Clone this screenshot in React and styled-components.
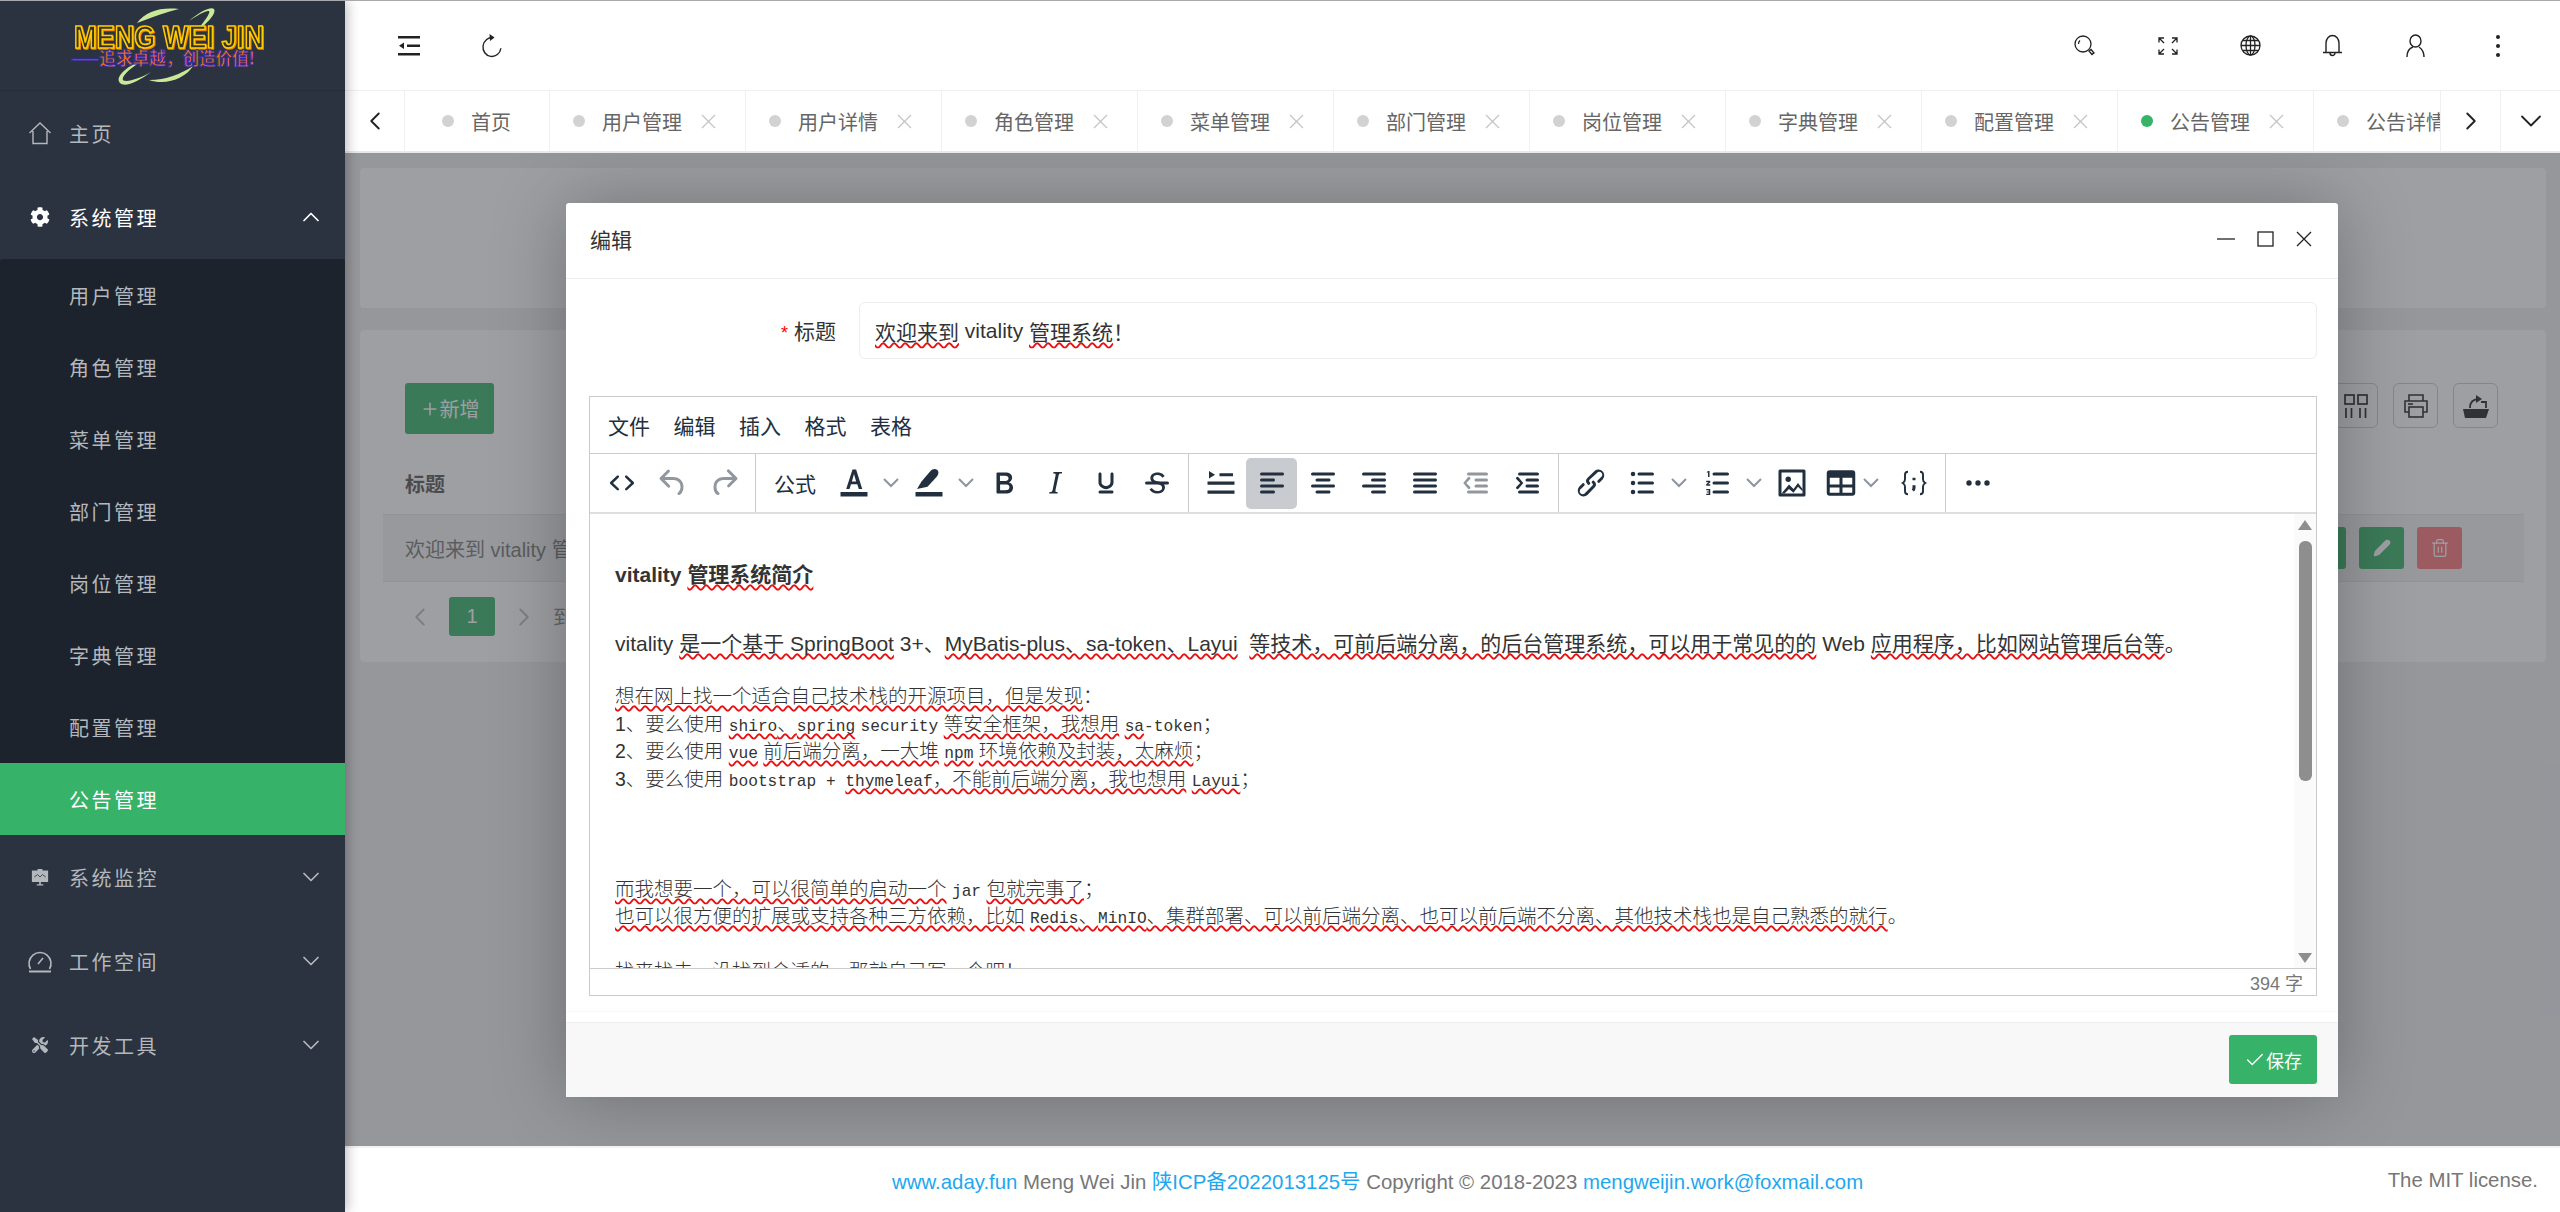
import React from 'react';
import styled, { createGlobalStyle } from 'styled-components';
import { ChevronDown, ChevronLeft, ChevronRight, ChevronUp, Check, Pencil, Plus, Trash2 } from 'lucide-react';
import { FaCog, FaTools } from 'react-icons/fa';

const Global = createGlobalStyle`
  html, body { margin: 0; padding: 0; height: 100%; overflow: hidden; }
  body { font-family: "Liberation Sans", "Noto Sans CJK SC", sans-serif; color: #333; background: #fff; }
  * { box-sizing: border-box; }
`;

const Page = styled.div`
  display: flex;
  height: 100vh;
  overflow: hidden;
  border-top: 1px solid #a9a9ad;
`;

/* sidebar */
const Aside = styled.aside`
  display: flex;
  flex-direction: column;
  flex: 0 0 345px;
  background: #2a333f;
  box-shadow: 2px 0 12px rgba(0, 0, 0, 0.28);
  position: relative;
  z-index: 3;
`;
const LogoBox = styled.div`
  display: flex;
  align-items: center;
  justify-content: center;
  height: 90px;
  border-bottom: 1px solid #252d38;
  padding-right: 10px;
`;
const LogoTitle = styled.text`
  font-family: "Liberation Sans", sans-serif;
  font-weight: 700;
  font-size: 31px;
  fill: #33332a;
  stroke: #ffcc00;
  stroke-width: 1.7px;
  filter: drop-shadow(1px 1px 0 #f08000);
`;
const LogoSlogan = styled.text`
  font-family: "Noto Sans CJK SC", sans-serif;
  font-weight: 700;
  font-size: 18px;
  fill: #f07010;
  stroke: #2a2ab0;
  stroke-width: 0.8px;
`;
const NavItem = styled.div`
  display: flex;
  align-items: center;
  height: 84px;
  padding-left: 27px;
  font-size: 20px;
  letter-spacing: 2.5px;
  color: ${p => (p.$open ? '#fff' : '#b4b8bd')};
  svg.lead { width: 26px; height: 26px; margin-right: 16px; flex: none; }
  svg.arrow { margin-left: auto; margin-right: 20px; flex: none; }
`;
const SubMenu = styled.div`
  background: #1c232c;
  border-radius: 3px 3px 0 0;
`;
const SubItem = styled.div`
  display: flex;
  align-items: center;
  height: 72px;
  padding-left: 69px;
  font-size: 20px;
  letter-spacing: 2.5px;
  color: ${p => (p.$active ? '#fff' : '#b4b8bd')};
  background: ${p => (p.$active ? '#36b368' : 'transparent')};
`;

/* main column */
const Main = styled.main`
  flex: 1;
  min-width: 0;
  display: flex;
  flex-direction: column;
`;
const Header = styled.header`
  display: flex;
  align-items: center;
  justify-content: space-between;
  height: 90px;
  padding: 0 21px 0 23px;
  background: #fff;
  border-bottom: 1px solid #f0f0f0;
  flex: none;
`;
const HeaderGroup = styled.div`
  display: flex;
`;
const HeaderBtn = styled.div`
  display: flex;
  align-items: center;
  justify-content: center;
  width: 82.5px;
  height: 89px;
  color: #222;
`;
const TabBar = styled.nav`
  display: flex;
  height: 62px;
  background: #fff;
  border-bottom: 2px solid #e9e9e9;
  flex: none;
`;
const ArrowCell = styled.div`
  display: flex;
  align-items: center;
  justify-content: center;
  flex: 0 0 60px;
  color: #222;
  border-${p => p.$side}: 1px solid #f0f0f0;
`;
const TabScroll = styled.div`
  display: flex;
  flex: 1;
  min-width: 0;
  overflow: hidden;
`;
const Tab = styled.div`
  display: flex;
  align-items: center;
  flex: 0 0 ${p => (p.$home ? '145px' : '196px')};
  padding-left: ${p => (p.$home ? '37px' : '23px')};
  border-right: 1px solid #f0f0f0;
  font-size: 20px;
  color: #666;
  white-space: nowrap;
`;
const Dot = styled.i`
  width: 12px;
  height: 12px;
  border-radius: 50%;
  margin-right: 17px;
  flex: none;
  background: ${p => (p.$active ? '#36b368' : '#d2d2d2')};
`;
const TabClose = styled.svg`
  width: 15px;
  height: 15px;
  margin-left: 19px;
  flex: none;
  stroke: #c4c4c4;
  stroke-width: 1.2;
`;

/* content behind the dialog */
const Content = styled.section`
  position: relative;
  flex: 1;
  min-height: 0;
  overflow: hidden;
  background: #eeeef0;
  padding: 15px 14px 0 15px;
`;
const Card = styled.div`
  background: #fff;
  border-radius: 4px;
  margin-bottom: 22px;
  height: ${p => p.$h}px;
  padding: ${p => p.$pad || 0};
`;
const ListBar = styled.div`
  display: flex;
  justify-content: space-between;
  padding: 0 26px 0 22px;
`;
const AddBtn = styled.div`
  display: flex;
  align-items: center;
  justify-content: center;
  width: 89px;
  height: 51px;
  background: #36b368;
  border-radius: 3px;
  color: #fff;
  font-size: 20px;
`;
const ToolIcons = styled.div`
  display: flex;
  gap: 15px;
`;
const ToolIcon = styled.div`
  display: flex;
  align-items: center;
  justify-content: center;
  width: 45px;
  height: 45px;
  border: 1px solid #ccc;
  border-radius: 6px;
  color: #222;
`;
const TableHead = styled.div`
  display: flex;
  align-items: center;
  height: 80px;
  padding: 18px 22px 0;
  font-size: 20px;
  font-weight: 700;
  color: #555;
`;
const TableRow = styled.div`
  display: flex;
  align-items: center;
  justify-content: space-between;
  height: 68px;
  padding: 0 62px 0 22px;
  background: #f3f3f4;
  border-top: 1px solid #e6e6e6;
  border-bottom: 1px solid #e6e6e6;
  font-size: 20px;
  color: #777;
`;
const RowBtns = styled.div`
  display: flex;
  gap: 13px;
`;
const RowBtn = styled.div`
  display: flex;
  align-items: center;
  justify-content: center;
  width: 45px;
  height: 42px;
  border-radius: 3px;
  color: #fff;
  background: ${p => p.$bg};
`;
const Pager = styled.div`
  display: flex;
  align-items: center;
  height: 39px;
  margin-top: 15px;
  padding-left: 22px;
  font-size: 20px;
  color: #888;
  svg { color: #bbb; }
`;
const PageNum = styled.div`
  display: flex;
  align-items: center;
  justify-content: center;
  width: 46px;
  height: 39px;
  margin: 0 14px;
  border-radius: 3px;
  background: #36b368;
  color: #fff;
`;
const PagerGoto = styled.span`
  margin-left: 14px;
`;

/* dialog */
const Shade = styled.div`
  position: absolute;
  inset: 0;
  background: rgba(64, 66, 73, 0.51);
`;
const Dialog = styled.div`
  position: absolute;
  left: 221px;
  top: 50px;
  width: 1772px;
  height: 894px;
  display: flex;
  flex-direction: column;
  background: #fff;
  border-radius: 3px;
  box-shadow: 0 0 75px rgba(0, 0, 0, 0.28);
`;
const DialogTitle = styled.div`
  display: flex;
  align-items: center;
  justify-content: space-between;
  height: 76px;
  padding: 0 26px 4px 24px;
  border-bottom: 1px solid #eee;
  font-size: 21px;
  color: #333;
  flex: none;
`;
const WinBtns = styled.div`
  display: flex;
  align-items: center;
  gap: 22px;
  color: #222;
`;
const DialogBody = styled.div`
  flex: 1;
  padding: 23px 21px 0 23px;
  &::after {
    content: '';
    display: block;
    margin: 15px -21px 0 -23px;
    border-top: 1px solid #f6f6f6;
  }
`;
const FormRow = styled.div`
  display: flex;
  align-items: center;
  margin-bottom: 37px;
`;
const FormLabel = styled.label`
  flex: 0 0 270px;
  padding: 0 23px 2px 0;
  text-align: right;
  font-size: 21px;
  color: #333;
  span { color: #f00; margin-right: 6px; font-size: 18px; }
`;
const TitleInput = styled.div`
  flex: 1;
  display: flex;
  align-items: center;
  height: 57px;
  padding-left: 15px;
  border: 1px solid #eee;
  border-radius: 6px;
  font-size: 21px;
  color: #333;
  white-space: pre;
`;
const Err = styled.span`
  text-decoration: underline wavy #e81010 1.5px;
  text-decoration-skip-ink: none;
  text-underline-offset: 2px;
`;

/* editor */
const Editor = styled.div`
  display: flex;
  flex-direction: column;
  height: 600px;
  border: 1px solid #ccc;
`;
const MenuBar = styled.div`
  display: flex;
  gap: 23.5px;
  align-items: center;
  height: 57px;
  padding-left: 18px;
  border-bottom: 1px solid #ccc;
  font-size: 21px;
  color: #222f3e;
  flex: none;
`;
const ToolBar = styled.div`
  display: flex;
  height: 60px;
  border-bottom: 2px solid #dedede;
  flex: none;
`;
const ToolGroup = styled.div`
  display: flex;
  align-items: center;
  padding: 0 6px;
  border-right: ${p => (p.$last ? 'none' : '1px solid #ccc')};
`;
const ToolBtn = styled.div`
  display: flex;
  align-items: center;
  justify-content: ${p => (p.$split ? 'flex-start' : 'center')};
  width: ${p => p.$w || 51}px;
  height: 51px;
  padding-left: ${p => (p.$split ? '6px' : '0')};
  border-radius: 5px;
  font-size: 21px;
  color: ${p => (p.$off ? 'rgba(34,47,62,.5)' : '#222f3e')};
  background: ${p => (p.$on ? '#c8cbcf' : 'transparent')};
  svg { fill: currentColor; flex: none; }
`;
const CaretSvg = styled.svg`
  && { fill: none; }
  stroke: #8d95a0;
  stroke-width: 2;
`;
const BraceSvg = styled.svg`
  && { fill: none; }
  stroke: currentColor;
  stroke-width: 1.3;
`;
const EditorBody = styled.div`
  flex: 1;
  min-height: 0;
  display: flex;
`;
const EditArea = styled.div`
  flex: 1;
  min-width: 0;
  overflow: hidden;
  padding: 45px 0 0 25px;
  color: #333;
`;
const Heading = styled.div`
  font-size: 21px;
  font-weight: 700;
  line-height: 32px;
  margin-bottom: 37px;
`;
const Para = styled.div`
  font-size: 21px;
  line-height: 32px;
  margin-bottom: 23px;
  white-space: pre;
`;
const MonoLine = styled.div`
  font-size: 19.5px;
  line-height: 27.5px;
  height: 27.5px;
  white-space: pre;
  color: #333;
  font-weight: 300;
`;
const Latin = styled.span`
  font-family: "Liberation Mono", monospace;
  font-size: 16.2px;
`;
const ScrollBar = styled.div`
  flex: 0 0 22px;
  display: flex;
  flex-direction: column;
  align-items: center;
  background: #fafafa;
  padding: 6px 0 5px;
`;
const ScrollArrow = styled.i`
  width: 0;
  height: 0;
  border-left: 7px solid transparent;
  border-right: 7px solid transparent;
  border-${p => (p.$up ? 'bottom' : 'top')}: 10px solid #8e8e8e;
  ${p => (p.$up ? '' : 'margin-top: auto;')}
`;
const ScrollThumb = styled.div`
  width: 13px;
  height: 240px;
  margin-top: 11px;
  background: #8e8e8e;
  border-radius: 6px;
`;
const StatusBar = styled.div`
  display: flex;
  align-items: center;
  justify-content: flex-end;
  height: 27px;
  padding-right: 13px;
  border-top: 1px solid #ccc;
  font-size: 18px;
  color: #777;
  flex: none;
`;
const DialogFoot = styled.div`
  display: flex;
  align-items: flex-start;
  justify-content: flex-end;
  height: 75px;
  padding: 12px 21px 0 0;
  background: #f8f8f8;
  border-top: 1px solid #eee;
  flex: none;
`;
const SaveBtn = styled.div`
  display: flex;
  align-items: center;
  justify-content: center;
  width: 88px;
  height: 49px;
  border-radius: 3px;
  background: #36b368;
  color: #fff;
  font-size: 18px;
`;

const Footer = styled.footer`
  display: flex;
  align-items: center;
  justify-content: space-between;
  height: 66px;
  padding: 0 22px 0 547px;
  background: #fff;
  border-top: 2px solid #f2f2f2;
  font-size: 20.4px;
  color: #777;
  position: relative;
  z-index: 2;
  flex: none;
  a { color: #1ea7ef; text-decoration: none; }
`;

/* icons */
const Ti = ({ children }) => (
  <svg width="36" height="36" viewBox="0 0 24 24">{children}</svg>
);
const Caret = () => (
  <CaretSvg width="24" height="12" viewBox="0 0 24 12"><path d="M5 2l7 7 7-7" /></CaretSvg>
);
const LogoMark = () => (
  <svg width="194" height="80" viewBox="0 0 194 80">
    <g fill="#c9e89a">
      <path d="M66 17C75 5 90 1 108 3 95 6 85 10 66 17z" />
      <path d="M118 15C128 6 140 0 143 3c3 5-8 15-18 23 7-9 15-19 13-21-3-1-13 5-20 10z" />
      <path d="M49 77c-5-5 3-15 23-23C60 62 50 70 52 74c3 3 18-2 28-8C68 75 54 82 49 77z" />
      <path d="M78 74c17 0 32-6 44-14-7 12-27 20-44 14z" />
    </g>
    <LogoTitle x="3" y="42" textLength="190" lengthAdjust="spacingAndGlyphs">MENG WEI JIN</LogoTitle>
    <LogoSlogan x="0" y="59" textLength="184" lengthAdjust="spacingAndGlyphs">——追求卓越，创造价值!</LogoSlogan>
  </svg>
);
const HomeIcon = () => (
  <svg className="lead" viewBox="0 0 26 26" fill="none" stroke="#b4b8bd" strokeWidth="1.4"><path d="M2.500 13L13 3l10.500 10M6 11v12.500h14V11" /></svg>
);
const EaselIcon = () => (
  <svg className="lead" viewBox="-3 -3 32 32" fill="#b4b8bd">
    <path d="M3 5h7V3h6v2h7v14H14v3h3v1.500H9V22h3v-3H3z" />
    <path d="M6 13l4-3 3 3 3-3 4 3" fill="none" stroke="#2a333f" strokeWidth="1" />
  </svg>
);
const GaugeIcon = () => (
  <svg className="lead" viewBox="0 0 26 26" fill="none" stroke="#b4b8bd" strokeWidth="1.6">
    <path d="M3.500 21A11 11 0 1 1 22.500 21" />
    <path d="M2 23.500h22" strokeWidth="2" />
    <path d="M11 16l5-6" />
  </svg>
);
const FoldIcon = () => (
  <svg width="22" height="20" viewBox="0 0 22 20" fill="#222">
    <rect width="22" height="2.500" y="0" /><rect width="13" height="2.500" x="9" y="8.500" /><rect width="22" height="2.500" y="17" />
    <path d="M1 9.700l5-3.200v6.400z" />
  </svg>
);
const RefreshIcon = () => (
  <svg width="22" height="24" viewBox="0 0 22 24" fill="none" stroke="#222" strokeWidth="1.4">
    <path d="M11 3.500a9 9.500 0 1 0 9 9.500" transform="rotate(8 11 13)" /><path d="M8.500 0l5 3.500-4.500 3.500z" fill="#222" stroke="none" />
  </svg>
);
const SearchIcon = () => (
  <svg width="22" height="22" viewBox="0 0 22 22" fill="none" stroke="#222" strokeWidth="1.3">
    <circle cx="9" cy="9" r="8" /><path d="M4.500 9a4.500 4.500 0 0 1 1.500-3.500" /><path d="M15 16l3 3.500 2-1.500-3-3.500z" />
  </svg>
);
const ExpandIcon = () => (
  <svg width="20" height="18" viewBox="0 0 20 18" fill="none" stroke="#222" strokeWidth="1.3">
    <path d="M1 5.500V1h5M1 1l5 5M19 5.500V1h-5M19 1l-5 5M1 12.500V17h5M1 17l5-5M19 12.500V17h-5M19 17l-5-5" />
  </svg>
);
const GlobeIcon = () => (
  <svg width="21" height="21" viewBox="0 0 21 21" fill="none" stroke="#222" strokeWidth="1.3">
    <circle cx="10.500" cy="10.500" r="9.500" /><ellipse cx="10.500" cy="10.500" rx="4.500" ry="9.500" />
    <path d="M10.500 1v19M1 10.500h19M2.500 5.500h16M2.500 15.500h16" />
  </svg>
);
const BellIcon = () => (
  <svg width="21" height="24" viewBox="0 0 21 24" fill="none" stroke="#222" strokeWidth="1.4">
    <path d="M4 18V9a6.500 7.500 0 0 1 13 0v9M1 18.500h19M8 19a2.500 2.500 0 0 0 5 0" />
  </svg>
);
const UserIcon = () => (
  <svg width="19" height="24" viewBox="0 0 19 24" fill="none" stroke="#222" strokeWidth="1.4">
    <ellipse cx="9.500" cy="7" rx="5.500" ry="6" /><path d="M1 23c0-6 3-9 6-10M18 23c0-5-2-8-5-10" />
  </svg>
);
const DotsIcon = () => (
  <svg width="6" height="24" viewBox="0 0 6 24" fill="#222"><circle cx="3" cy="3" r="2" /><circle cx="3" cy="12" r="2" /><circle cx="3" cy="21" r="2" /></svg>
);
const ColsIcon = () => (
  <svg width="26" height="26" viewBox="0 0 26 26" fill="none" stroke="#222" strokeWidth="1.700">
    <rect x="2" y="2" width="9" height="9" /><rect x="15" y="2" width="9" height="9" />
    <path d="M3 15v10M8.500 15v10M17 15v10M22.500 15v10" />
  </svg>
);
const PrintIcon = () => (
  <svg width="26" height="26" viewBox="0 0 26 26" fill="none" stroke="#222" strokeWidth="1.600">
    <path d="M6 8V2h14v6M6 19H2V8h22v11h-4" /><rect x="6" y="14" width="14" height="10" /><path d="M5 11h5" />
  </svg>
);
const ExportIcon = () => (
  <svg width="28" height="26" viewBox="0 0 28 26" fill="#222">
    <path d="M1 16h26l-3 9H3z" />
    <path d="M24 15V9h-5M8 15c0-6 3-9 9-9" fill="none" stroke="#222" strokeWidth="1.800" />
    <path d="M14 2l6 4-6 4z" />
  </svg>
);

const tabs = ['用户管理', '用户详情', '角色管理', '菜单管理', '部门管理', '岗位管理', '字典管理', '配置管理', '公告管理', '公告详情'];
const subs = ['用户管理', '角色管理', '菜单管理', '部门管理', '岗位管理', '字典管理', '配置管理', '公告管理'];
const closedNav = [
  ['系统监控', <EaselIcon key="a" />],
  ['工作空间', <GaugeIcon key="b" />],
  ['开发工具', <FaTools key="c" className="lead" style={{ padding: 5 }} />],
];

export default function App() {
  return (
    <Page>
      <Global />
      <Aside>
        <LogoBox><LogoMark /></LogoBox>
        <NavItem><HomeIcon />主页</NavItem>
        <NavItem $open>
          <FaCog className="lead" style={{ padding: 3 }} />系统管理
          <ChevronUp className="arrow" size={28} strokeWidth={1.5} />
        </NavItem>
        <SubMenu>
          {subs.map(s => <SubItem key={s} $active={s === '公告管理'}>{s}</SubItem>)}
        </SubMenu>
        {closedNav.map(([label, icon]) => (
          <NavItem key={label}>
            {icon}{label}
            <ChevronDown className="arrow" size={28} strokeWidth={1.5} />
          </NavItem>
        ))}
      </Aside>

      <Main>
        <Header>
          <HeaderGroup>
            <HeaderBtn><FoldIcon /></HeaderBtn>
            <HeaderBtn><RefreshIcon /></HeaderBtn>
          </HeaderGroup>
          <HeaderGroup>
            <HeaderBtn><SearchIcon /></HeaderBtn>
            <HeaderBtn><ExpandIcon /></HeaderBtn>
            <HeaderBtn><GlobeIcon /></HeaderBtn>
            <HeaderBtn><BellIcon /></HeaderBtn>
            <HeaderBtn><UserIcon /></HeaderBtn>
            <HeaderBtn><DotsIcon /></HeaderBtn>
          </HeaderGroup>
        </Header>

        <TabBar>
          <ArrowCell $side="right"><ChevronLeft size={30} strokeWidth={1.5} /></ArrowCell>
          <TabScroll>
            <Tab $home><Dot />首页</Tab>
            {tabs.map(t => (
              <Tab key={t}>
                <Dot $active={t === '公告管理'} />{t}
                <TabClose viewBox="0 0 15 15"><path d="M1 1l13 13M14 1L1 14" /></TabClose>
              </Tab>
            ))}
          </TabScroll>
          <ArrowCell $side="left"><ChevronRight size={30} strokeWidth={1.5} /></ArrowCell>
          <ArrowCell $side="left"><ChevronDown size={36} strokeWidth={1.2} /></ArrowCell>
        </TabBar>

        <Content>
          <Card $h={140} />
          <Card $h={332} $pad="53px 22px 0 23px">
            <ListBar>
              <AddBtn><Plus size={20} strokeWidth={1.800} />新增</AddBtn>
              <ToolIcons>
                <ToolIcon><ColsIcon /></ToolIcon>
                <ToolIcon><PrintIcon /></ToolIcon>
                <ToolIcon><ExportIcon /></ToolIcon>
              </ToolIcons>
            </ListBar>
            <TableHead>标题</TableHead>
            <TableRow>
              <span>欢迎来到 vitality 管理系统！</span>
              <RowBtns>
                <RowBtn $bg="#36b368" />
                <RowBtn $bg="#36b368"><Pencil size={18} fill="#fff" /></RowBtn>
                <RowBtn $bg="#fb737b"><Trash2 size={20} strokeWidth={1.500} /></RowBtn>
              </RowBtns>
            </TableRow>
            <Pager>
              <ChevronLeft size={30} strokeWidth={1.5} />
              <PageNum>1</PageNum>
              <ChevronRight size={30} strokeWidth={1.5} />
              <PagerGoto>到第</PagerGoto>
            </Pager>
          </Card>

          <Shade>
            <Dialog>
              <DialogTitle>
                编辑
                <WinBtns>
                  <svg width="18" height="16" viewBox="0 0 18 16" stroke="#222" strokeWidth="1.300"><path d="M0 8h18" /></svg>
                  <svg width="17" height="16" viewBox="0 0 17 16" fill="none" stroke="#222" strokeWidth="1.300"><rect x="1" y="1" width="15" height="14" /></svg>
                  <svg width="16" height="16" viewBox="0 0 16 16" stroke="#222" strokeWidth="1.300"><path d="M1 1l14 14M15 1L1 15" /></svg>
                </WinBtns>
              </DialogTitle>
              <DialogBody>
                <FormRow>
                  <FormLabel><span>*</span>标题</FormLabel>
                  <TitleInput><Err>欢迎来到</Err> vitality <Err>管理系统</Err>！</TitleInput>
                </FormRow>
                <Editor>
                  <MenuBar>
                    <span>文件</span><span>编辑</span><span>插入</span><span>格式</span><span>表格</span>
                  </MenuBar>
                  <ToolBar>
                    <ToolGroup>
                      <ToolBtn><Ti><path d="M9.800 15.700c.3.300.3.800 0 1-.3.400-.9.400-1.200 0l-4.400-4.100a.8.800 0 0 1 0-1.200l4.400-4.200c.3-.3.900-.3 1.200 0 .3.300.3.800 0 1.100L6 12l3.800 3.700zm4.400 0L18 12l-3.800-3.700a.8.800 0 0 1 0-1.100c.3-.3.900-.3 1.200 0l4.400 4.200c.3.300.3.900 0 1.200l-4.400 4.100c-.3.400-.9.400-1.200 0a.8.800 0 0 1 0-1z" /></Ti></ToolBtn>
                      <ToolBtn $off><Ti><path d="M6.400 8H12c3.700 0 6.200 2 6.800 5.100.6 2.700-.4 5.600-2.300 6.800a1 1 0 0 1-1-1.800c1.100-.7 1.800-2.700 1.400-4.600-.5-2.100-2.100-3.500-4.900-3.500H6.400l3.300 3.300a1 1 0 1 1-1.400 1.400l-5-5a1 1 0 0 1 0-1.400l5-5a1 1 0 0 1 1.400 1.400L6.400 8z" /></Ti></ToolBtn>
                      <ToolBtn $off><Ti><path d="M17.600 10H12c-2.800 0-4.400 1.400-4.900 3.500-.4 2 .3 4 1.400 4.600a1 1 0 1 1-1 1.800c-2-1.200-2.900-4.100-2.300-6.800.6-3 3-5.100 6.800-5.100h5.600l-3.300-3.300a1 1 0 1 1 1.400-1.400l5 5a1 1 0 0 1 0 1.400l-5 5a1 1 0 0 1-1.400-1.400l3.300-3.300z" /></Ti></ToolBtn>
                    </ToolGroup>
                    <ToolGroup>
                      <ToolBtn $w={66}>公式</ToolBtn>
                      <ToolBtn><Ti><path d="M3 18h18v3H3z" /><path d="M11 3h2.400L17.500 16h-2.300l-1-3.200H10L9 16H6.800zm-.4 8h2.800L12 6z" fillRule="evenodd" /></Ti></ToolBtn>
                      <ToolBtn $w={24}><Caret /></ToolBtn>
                      <ToolBtn><Ti><path d="M3 18h18v3H3z" /><path d="M4 16l3-5 6-7c1-1 3-2 4.500-.6 1.500 1.500.5 3.500-.5 4.600l-6 6.500z" /></Ti></ToolBtn>
                      <ToolBtn $w={24}><Caret /></ToolBtn>
                      <ToolBtn><Ti><path d="M7.800 19c-.3 0-.5 0-.6-.2l-.2-.5V5.700c0-.2 0-.4.2-.5l.6-.2h5c1.500 0 2.700.3 3.500 1 .7.600 1.100 1.400 1.100 2.500a3 3 0 0 1-.6 1.900c-.4.600-1 1-1.600 1.200.4.100.9.300 1.300.6s.8.700 1 1.200c.4.400.5 1 .5 1.600 0 1.300-.4 2.300-1.300 3-.8.700-2.100 1-3.800 1H7.800zm5-8.300c.6 0 1.200-.1 1.600-.5.400-.3.600-.7.600-1.300 0-1.100-.8-1.700-2.300-1.700H9.300v3.500h3.500zm.5 6c.7 0 1.300-.1 1.700-.4.400-.4.600-.9.600-1.500s-.2-1-.7-1.400c-.4-.3-1-.4-2-.4H9.400v3.800h3.900z" /></Ti></ToolBtn>
                      <ToolBtn><Ti><path d="M16.700 4.700l-.1.900h-.3c-.6 0-1 0-1.400.3-.3.300-.4.600-.5 1.100l-2.100 9.800v.6c0 .5.400.8 1.400.8h.2l-.2.8H8l.2-.8h.2c1.100 0 1.800-.5 2-1.500l2-9.800.1-.5c0-.6-.4-.8-1.400-.8h-.3l.2-.9h5.800z" /></Ti></ToolBtn>
                      <ToolBtn><Ti><path d="M16 5c.6 0 1 .4 1 1v5.500a4 4 0 0 1-.4 1.800l-1 1.400a5.300 5.300 0 0 1-5.500 1 5 5 0 0 1-1.600-1c-.5-.4-.8-.9-1.100-1.400a4 4 0 0 1-.4-1.800V6c0-.6.400-1 1-1s1 .4 1 1v5.500c0 .3 0 .6.200 1l.6.700a3.300 3.300 0 0 0 2.200.8 3.400 3.400 0 0 0 2.200-.8c.3-.2.400-.5.600-.8l.2-.9V6c0-.6.400-1 1-1zM8 17h8c.6 0 1 .4 1 1s-.4 1-1 1H8a1 1 0 0 1 0-2z" /></Ti></ToolBtn>
                      <ToolBtn><Ti><path d="M15.600 8.500c-.5-.7-1-1.100-1.300-1.300-.6-.4-1.300-.6-2-.6-2.700 0-2.800 1.700-2.800 2.100 0 1.600 1.800 2 3.200 2.300 4.400.9 4.600 2.800 4.600 3.900 0 1.400-.7 4.100-5 4.100A6.200 6.200 0 0 1 7 16.400l1.500-1.100c.4.600 1.600 2 3.700 2 1.600 0 2.500-.4 3-1.200.4-.8.3-2-.8-2.600-.7-.4-1.600-.7-2.900-1-1-.2-3.900-.8-3.900-3.600C7.600 6 10.300 5 12.400 5c2.900 0 4.200 1.600 4.700 2.400l-1.500 1.100z" /><path d="M5 11h14a1 1 0 0 1 0 2H5a1 1 0 0 1 0-2z" /></Ti></ToolBtn>
                    </ToolGroup>
                    <ToolGroup>
                      <ToolBtn><Ti><path d="M4 4l4 2.500L4 9zM11 5.500h9v2h-9zM3 11h18v2.200H3zM3 17h18v2.200H3z" /></Ti></ToolBtn>
                      <ToolBtn $on><Ti><path d="M5 5h14c.6 0 1 .4 1 1s-.4 1-1 1H5a1 1 0 1 1 0-2zm0 4h8c.6 0 1 .4 1 1s-.4 1-1 1H5a1 1 0 1 1 0-2zm0 8h8c.6 0 1 .4 1 1s-.4 1-1 1H5a1 1 0 0 1 0-2zm0-4h14c.6 0 1 .4 1 1s-.4 1-1 1H5a1 1 0 0 1 0-2z" /></Ti></ToolBtn>
                      <ToolBtn><Ti><path d="M5 5h14c.6 0 1 .4 1 1s-.4 1-1 1H5a1 1 0 1 1 0-2zm3 4h8c.6 0 1 .4 1 1s-.4 1-1 1H8a1 1 0 1 1 0-2zm0 8h8c.6 0 1 .4 1 1s-.4 1-1 1H8a1 1 0 0 1 0-2zm-3-4h14c.6 0 1 .4 1 1s-.4 1-1 1H5a1 1 0 0 1 0-2z" /></Ti></ToolBtn>
                      <ToolBtn><Ti><path d="M5 5h14c.6 0 1 .4 1 1s-.4 1-1 1H5a1 1 0 1 1 0-2zm6 4h8c.6 0 1 .4 1 1s-.4 1-1 1h-8a1 1 0 0 1 0-2zm0 8h8c.6 0 1 .4 1 1s-.4 1-1 1h-8a1 1 0 0 1 0-2zm-6-4h14c.6 0 1 .4 1 1s-.4 1-1 1H5a1 1 0 0 1 0-2z" /></Ti></ToolBtn>
                      <ToolBtn><Ti><path d="M5 5h14c.6 0 1 .4 1 1s-.4 1-1 1H5a1 1 0 1 1 0-2zm0 4h14c.6 0 1 .4 1 1s-.4 1-1 1H5a1 1 0 1 1 0-2zm0 4h14c.6 0 1 .4 1 1s-.4 1-1 1H5a1 1 0 0 1 0-2zm0 4h14c.6 0 1 .4 1 1s-.4 1-1 1H5a1 1 0 0 1 0-2z" /></Ti></ToolBtn>
                      <ToolBtn $off><Ti><path d="M7 5h12a1 1 0 0 1 0 2H7a1 1 0 1 1 0-2zm5 4h7a1 1 0 0 1 0 2h-7a1 1 0 0 1 0-2zm0 4h7a1 1 0 0 1 0 2h-7a1 1 0 0 1 0-2zm-5 4h12a1 1 0 0 1 0 2H7a1 1 0 0 1 0-2zM8 9.500L5.500 12 8 14.500a.9.900 0 0 1-1.300 1.300L3.500 12l3.200-3.800A.9.900 0 0 1 8 9.500z" /></Ti></ToolBtn>
                      <ToolBtn><Ti><path d="M7 5h12a1 1 0 0 1 0 2H7a1 1 0 1 1 0-2zm5 4h7a1 1 0 0 1 0 2h-7a1 1 0 0 1 0-2zm0 4h7a1 1 0 0 1 0 2h-7a1 1 0 0 1 0-2zm-5 4h12a1 1 0 0 1 0 2H7a1 1 0 0 1 0-2zM5 9.500L7.500 12 5 14.500a.9.900 0 0 0 1.300 1.300L9.500 12 6.300 8.200A.9.900 0 0 0 5 9.500z" /></Ti></ToolBtn>
                    </ToolGroup>
                    <ToolGroup>
                      <ToolBtn><Ti><path d="M6.200 12.300a1 1 0 0 1 1.400 1.400l-2 2a2 2 0 1 0 2.600 2.800l4.800-4.800a1 1 0 0 0 0-1.400 1 1 0 1 1 1.400-1.300 2.900 2.900 0 0 1 0 4L9.600 20a3.900 3.900 0 0 1-5.500-5.500l2-2zm11.600-.6a1 1 0 0 1-1.400-1.400l2-2a2 2 0 1 0-2.600-2.800L11 9.900a1 1 0 0 0 0 1.400 1 1 0 1 1-1.400 1.300 2.900 2.900 0 0 1 0-4L14.400 4a3.900 3.900 0 0 1 5.500 5.500l-2 2z" /></Ti></ToolBtn>
                      <ToolBtn><Ti><path d="M10 5h9a1 1 0 0 1 0 2h-9a1 1 0 0 1 0-2zm0 6h9a1 1 0 0 1 0 2h-9a1 1 0 0 1 0-2zm0 6h9a1 1 0 0 1 0 2h-9a1 1 0 0 1 0-2z" /><circle cx="6" cy="6" r="1.500" /><circle cx="6" cy="12" r="1.500" /><circle cx="6" cy="18" r="1.500" /></Ti></ToolBtn>
                      <ToolBtn $w={24}><Caret /></ToolBtn>
                      <ToolBtn><Ti><path d="M10 5h9a1 1 0 0 1 0 2h-9a1 1 0 0 1 0-2zm0 6h9a1 1 0 0 1 0 2h-9a1 1 0 0 1 0-2zm0 6h9a1 1 0 0 1 0 2h-9a1 1 0 0 1 0-2z" /><path d="M6 4h1v4H6V5H5zM4.800 10.500h2.700v1.100l-1.500 1.200h1.500v1H4.800v-1l1.500-1.300H4.800zM4.800 16h2.700v4H4.800v-.9h1.700v-.7H5.200v-.8h1.300v-.7H4.800z" /></Ti></ToolBtn>
                      <ToolBtn $w={24}><Caret /></ToolBtn>
                      <ToolBtn><Ti><path d="M4 3h16a1 1 0 0 1 1 1v16a1 1 0 0 1-1 1H4a1 1 0 0 1-1-1V4a1 1 0 0 1 1-1zm1 2v14h14V5z" /><circle cx="9.500" cy="9.500" r="1.800" /><path d="M5 19l5-6 3 3 3-4 3 4v1.500l-3-3-3 4-3-2.500-3 3z" /></Ti></ToolBtn>
                      <ToolBtn $w={71} $split>
                        <Ti><path d="M4.500 3.500h15a2 2 0 0 1 2 2v13a2 2 0 0 1-2 2h-15a2 2 0 0 1-2-2v-13a2 2 0 0 1 2-2zM4.500 8.500V13h6.500V8.500zM13 8.500V13h6.500V8.500zM4.500 15v3.500h6.500V15zM13 15v3.500h6.500V15z" fillRule="evenodd" /></Ti>
                        <Caret />
                      </ToolBtn>
                      <ToolBtn>
                        <BraceSvg width="36" height="36" viewBox="0 0 24 24">
                          <path d="M8 4.500c-1.500 0-2 .8-2 2v3c0 1.200-.7 2-1.500 2.500.8.500 1.500 1.300 1.500 2.500v3c0 1.200.5 2 2 2M16 4.500c1.500 0 2 .8 2 2v3c0 1.200.7 2 1.500 2.500-.8.500-1.500 1.300-1.500 2.500v3c0 1.200-.5 2-2 2" />
                          <path d="M12 8.500v1.600M12 13.500v1.800c0 .7-.3 1.200-.8 1.700" strokeWidth="2" />
                        </BraceSvg>
                      </ToolBtn>
                    </ToolGroup>
                    <ToolGroup $last>
                      <ToolBtn><Ti><circle cx="6" cy="12" r="1.800" /><circle cx="12" cy="12" r="1.800" /><circle cx="18" cy="12" r="1.800" /></Ti></ToolBtn>
                    </ToolGroup>
                  </ToolBar>
                  <EditorBody>
                    <EditArea>
                      <Heading>vitality <Err>管理系统简介</Err></Heading>
                      <Para>vitality <Err>是一个基于 SpringBoot</Err> 3+、<Err>MyBatis-plus、sa-token、Layui</Err>  <Err>等技术，可前后端分离，的后台管理系统，可以用于常见的的</Err> Web <Err>应用程序，比如网站管理后台等</Err>。</Para>
                      <MonoLine><Err>想在网上找一个适合自己技术栈的开源项目，但是发现</Err>：</MonoLine>
                      <MonoLine>1、要么使用 <Err><Latin>shiro</Latin>、<Latin>spring</Latin></Err> <Latin>security</Latin> <Err>等安全框架，我想用</Err> <Latin><Err>sa</Err>-token</Latin>；</MonoLine>
                      <MonoLine>2、要么使用 <Err><Latin>vue</Latin></Err> <Err>前后端分离，一大堆</Err> <Err><Latin>npm</Latin></Err> <Err>环境依赖及封装，太麻烦</Err>；</MonoLine>
                      <MonoLine>3、要么使用 <Latin>bootstrap + </Latin><Err><Latin>thymeleaf</Latin>，不能前后端分离，我也想用</Err> <Err><Latin>Layui</Latin></Err>；</MonoLine>
                      <MonoLine />
                      <MonoLine />
                      <MonoLine />
                      <MonoLine><Err>而我想要一个，可以很简单的启动一个</Err> <Latin>jar</Latin> <Err>包就完事了</Err>；</MonoLine>
                      <MonoLine><Err>也可以很方便的扩展或支持各种三方依赖，比如</Err> <Err><Latin>Redis</Latin>、<Latin>MinIO</Latin>、集群部署、可以前后端分离、也可以前后端不分离、其他技术栈也是自己熟悉的就行</Err>。</MonoLine>
                      <MonoLine />
                      <MonoLine>找来找去，没找到合适的，那就自己写一个吧！</MonoLine>
                    </EditArea>
                    <ScrollBar>
                      <ScrollArrow $up />
                      <ScrollThumb />
                      <ScrollArrow />
                    </ScrollBar>
                  </EditorBody>
                  <StatusBar>394 字</StatusBar>
                </Editor>
              </DialogBody>
              <DialogFoot>
                <SaveBtn><Check size={22} strokeWidth={1.500} />保存</SaveBtn>
              </DialogFoot>
            </Dialog>
          </Shade>
        </Content>

        <Footer>
          <span>
            <a href="#a">www.aday.fun</a> Meng Wei Jin <a href="#b">陕ICP备2022013125号</a> Copyright © 2018-2023 <a href="#c">mengweijin.work@foxmail.com</a>
          </span>
          <span>The MIT license.</span>
        </Footer>
      </Main>
    </Page>
  );
}
